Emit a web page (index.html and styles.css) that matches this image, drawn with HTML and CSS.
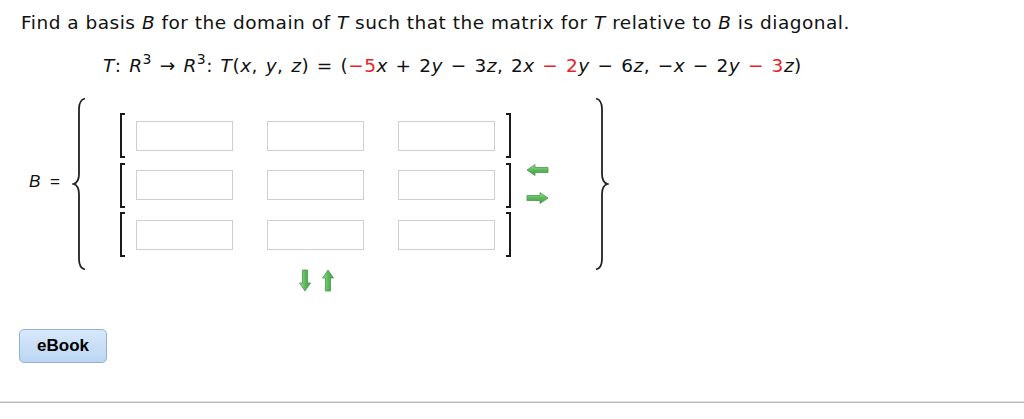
FILE: index.html
```html
<!DOCTYPE html>
<html>
<head>
<meta charset="utf-8">
<link rel="stylesheet" href="styles.css">
</head>
<body>
<div class="page">
  <p class="title">Find a basis <i>B</i> for the domain of <i>T</i> such that the matrix for <i>T</i> relative to <i>B</i> is diagonal.</p>
  <p class="eq"><i>T</i>: <i>R</i><sup>3</sup> → <i>R</i><sup>3</sup>: <i>T</i>(<i>x</i>, <i>y</i>, <i>z</i>) = (<span class="red">−5</span><i>x</i> + 2<i>y</i> − 3<i>z</i>, 2<i>x</i> <span class="red">− 2</span><i>y</i> − 6<i>z</i>, −<i>x</i> − 2<i>y</i> <span class="red">− 3</span><i>z</i>)</p>

  <div class="basis">
    <div class="label"><i>B</i> =</div>
    <svg class="brace" width="14" height="174" viewBox="0 0 14 174">
      <path d="M13,1.5 C9,2.5 7,5 7,12 L7,77 C7,83 5,86 1.5,87 C5,88 7,91 7,97 L7,162 C7,169 9,171.5 13,172.5" fill="none" stroke="#222" stroke-width="1.8"/>
    </svg>
    <div class="matrix-col">
      <div class="matrix">
        <div class="row">
          <span class="br br-l"></span>
          <span class="cell"></span><span class="cell"></span><span class="cell"></span>
          <span class="br br-r"></span>
        </div>
        <div class="row">
          <span class="br br-l"></span>
          <span class="cell"></span><span class="cell"></span><span class="cell"></span>
          <span class="br br-r"></span>
        </div>
        <div class="row">
          <span class="br br-l"></span>
          <span class="cell"></span><span class="cell"></span><span class="cell"></span>
          <span class="br br-r"></span>
        </div>
      </div>
      <div class="updown">
        <svg width="12" height="23" viewBox="0 0 12 23">
          <defs>
            <linearGradient id="gv" x1="0" y1="0" x2="1" y2="0">
              <stop offset="0" stop-color="#a6dca6"/>
              <stop offset="0.5" stop-color="#5cb85c"/>
              <stop offset="1" stop-color="#44a044"/>
            </linearGradient>
          </defs>
          <path d="M3.5,1 L8.5,1 L8.5,14 L11.5,14 L6,22 L0.5,14 L3.5,14 Z" fill="url(#gv)" stroke="#4a9a4a" stroke-width="0.8"/>
        </svg>
        <svg width="14" height="23" viewBox="0 0 14 23">
          <path d="M4.5,22 L9.5,22 L9.5,9 L12.5,9 L7,1 L1.5,9 L4.5,9 Z" fill="url(#gv)" stroke="#4a9a4a" stroke-width="0.8"/>
        </svg>
      </div>
    </div>
    <div class="side">
      <svg width="23" height="12" viewBox="0 0 23 12">
        <defs>
          <linearGradient id="gh" x1="0" y1="0" x2="0" y2="1">
            <stop offset="0" stop-color="#a6dca6"/>
            <stop offset="0.5" stop-color="#5cb85c"/>
            <stop offset="1" stop-color="#44a044"/>
          </linearGradient>
        </defs>
        <path d="M22,3.5 L22,8.5 L9,8.5 L9,11.5 L1,6 L9,0.5 L9,3.5 Z" fill="url(#gh)" stroke="#4a9a4a" stroke-width="0.8"/>
      </svg>
      <svg width="23" height="12" viewBox="0 0 23 12">
        <path d="M1,3.5 L1,8.5 L14,8.5 L14,11.5 L22,6 L14,0.5 L14,3.5 Z" fill="url(#gh)" stroke="#4a9a4a" stroke-width="0.8"/>
      </svg>
    </div>
    <svg class="brace brace-r" width="14" height="174" viewBox="0 0 14 174">
      <path d="M1,1.5 C5,2.5 7,5 7,12 L7,77 C7,83 9,86 12.5,87 C9,88 7,91 7,97 L7,162 C7,169 5,171.5 1,172.5" fill="none" stroke="#222" stroke-width="1.8"/>
    </svg>
  </div>

  <button class="ebook">eBook</button>
</div>
<div class="rule"></div>
</body>
</html>
```

FILE: styles.css
```css
html, body {
  margin: 0;
  padding: 0;
  background: #fff;
}

.page {
  padding-left: 21px;
  height: 401px;
  box-sizing: border-box;
  padding-top: 12px;
}

.title {
  margin: 0;
  font-family: "DejaVu Sans", Verdana, sans-serif;
  font-size: 18.5px;
  letter-spacing: 0.5px;
  line-height: 22px;
  color: #111;
  white-space: nowrap;
}

.eq {
  margin: 21px 0 0 82px;
  font-family: "DejaVu Sans", Verdana, sans-serif;
  font-size: 18.5px;
  letter-spacing: 0.5px;
  word-spacing: 1.3px;
  line-height: 22px;
  color: #111;
  white-space: nowrap;
}

.eq sup {
  font-size: 14px;
  line-height: 0;
  vertical-align: 0;
  position: relative;
  top: -8px;
}

.red {
  color: #e8222a;
}

.basis {
  display: flex;
  align-items: flex-start;
  margin-top: 20px;
}

.label {
  margin-top: 76px;
  margin-left: 8px;
  width: 43px;
  font-family: "Liberation Sans", Arial, sans-serif;
  font-size: 17px;
  word-spacing: 5px;
  line-height: 18px;
  color: #111;
}

.brace {
  display: block;
  flex: none;
}

.matrix-col {
  margin-left: 34px;
  margin-top: 16px;
  display: flex;
  flex-direction: column;
  align-items: center;
}

.matrix {
  display: flex;
  flex-direction: column;
  gap: 4.5px;
}

.row {
  display: flex;
  align-items: center;
  height: 45px;
}

.br {
  display: block;
  width: 5px;
  height: 45px;
  box-sizing: border-box;
  border: 2px solid #1a1a1a;
}

.br-l {
  border-right: none;
  margin-right: 11px;
}

.br-r {
  border-left: none;
  margin-left: 11px;
}

.cell {
  display: block;
  width: 97px;
  height: 30px;
  box-sizing: border-box;
  border: 1px solid #cfcfcf;
  background: #fff;
}

.cell + .cell {
  margin-left: 34px;
}

.updown {
  display: flex;
  gap: 10px;
  margin-top: 12px;
  padding-left: 2px;
}

.updown svg {
  display: block;
}

.side {
  display: flex;
  flex-direction: column;
  gap: 16px;
  margin-left: 15px;
  margin-top: 67px;
}

.side svg {
  display: block;
}

.brace-r {
  margin-left: 46px;
}

.ebook {
  display: block;
  margin-top: 37px;
  margin-left: -2px;
  width: 88px;
  height: 34px;
  border: 1px solid #8eb2da;
  border-radius: 5px;
  background: linear-gradient(#d7e8fb, #bcd6f2);
  font-family: "Liberation Sans", Arial, sans-serif;
  font-weight: bold;
  font-size: 17px;
  color: #000;
  padding: 0;
}

.rule {
  height: 1px;
  border-top: 1px solid #e4e4e4;
  background: #b8b8b8;
}
```
